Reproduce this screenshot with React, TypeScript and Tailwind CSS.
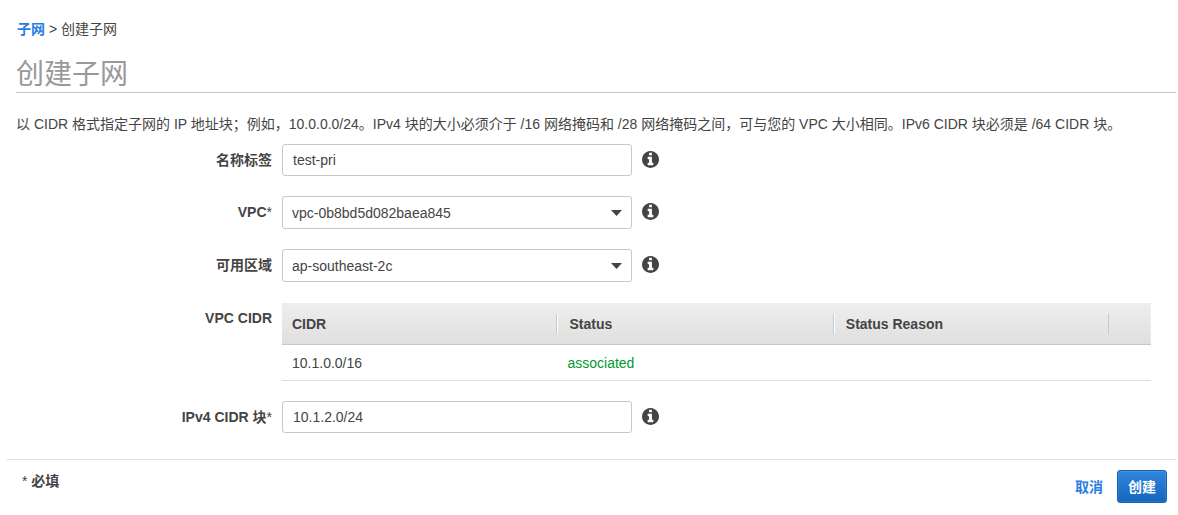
import { useState } from 'react';
import type { ReactNode } from 'react';

function InfoButton({ label }: { label: string }) {
  return (
    <button type="button" aria-label={label} className="mt-[7px] ml-2.5 shrink-0 self-start text-[#444]">
      <svg viewBox="128 128 1536 1536" className="block size-[17px]" fill="currentColor" aria-hidden="true">
        <path d="M1152 1376v-160q0-14-9-23t-23-9h-96v-512q0-14-9-23t-23-9h-320q-14 0-23 9t-9 23v160q0 14 9 23t23 9h96v320h-96q-14 0-23 9t-9 23v160q0 14 9 23t23 9h448q14 0 23-9t9-23zm-128-896v-160q0-14-9-23t-23-9h-192q-14 0-23 9t-9 23v160q0 14 9 23t23 9h192q14 0 23-9t9-23zm640 416q0 209-103 385.500t-279.500 279.500-385.500 103-385.500-103-279.500-279.500-103-385.500 103-385.500 279.500-279.500 385.500-103 385.500 103 279.500 279.500 103 385.500z" />
      </svg>
    </button>
  );
}

type FieldProps = { id: string; label: string; required?: boolean };

function Row({ id, label, required, children }: FieldProps & { children: ReactNode }) {
  return (
    <div className="flex">
      <label htmlFor={id} className="mr-2.5 w-64 shrink-0 pt-1.5 text-right leading-5 font-bold">
        {label}
        {required && <span className="font-normal">*</span>}
      </label>
      {children}
    </div>
  );
}

function TextField({ initial, ...field }: FieldProps & { initial: string }) {
  const [value, setValue] = useState(initial);
  return (
    <Row {...field}>
      <input
        id={field.id}
        type="text"
        value={value}
        onChange={(e) => setValue(e.target.value)}
        className="h-8 w-[350px] rounded-[3px] border border-[#c8c8c8] bg-white px-2.5 text-sm outline-none focus:border-[#2a7de1]"
      />
      <InfoButton label={field.label} />
    </Row>
  );
}

function SelectField({ options, ...field }: FieldProps & { options: string[] }) {
  return (
    <Row {...field}>
      <div className="grid w-[350px] items-center">
        <select
          id={field.id}
          className="col-start-1 row-start-1 h-[33px] w-full appearance-none rounded-[3px] border border-[#c8c8c8] bg-white pr-8 pl-[9px] text-sm outline-none focus:border-[#2a7de1]"
        >
          {options.map((option) => (
            <option key={option}>{option}</option>
          ))}
        </select>
        <svg
          viewBox="0 0 11 6"
          className="pointer-events-none col-start-1 row-start-1 mr-2.5 h-1.5 w-[11px] justify-self-end"
          aria-hidden="true"
        >
          <path d="M0 0h11L5.5 6z" fill="#444" />
        </svg>
      </div>
      <InfoButton label={field.label} />
    </Row>
  );
}

const headings = ['CIDR', 'Status', 'Status Reason'];

export default function App() {
  return (
    <main className="bg-white pt-[19px] pr-0.5 pl-[7px] font-['Liberation_Sans','Noto_Sans_CJK_SC',sans-serif] text-sm text-[#444]">
      <div className="pl-[9px]">
        <nav className="pl-px leading-5">
          <a href="#subnets" className="font-bold text-[#2a7de1]">子网</a> &gt; 创建子网
        </nav>
        <h1 className="mt-[18px] border-b border-[#c8c8c8] text-[28px] leading-[35px] font-normal text-[#999]">
          创建子网
        </h1>
        <p className="mt-[21px] leading-5">
          以 CIDR 格式指定子网的 IP 地址块；例如，10.0.0.0/24。IPv4 块的大小必须介于 /16 网络掩码和 /28 网络掩码之间，可与您的 VPC 大小相同。IPv6 CIDR 块必须是 /64 CIDR 块。
        </p>
      </div>

      <form onSubmit={(e) => e.preventDefault()}>
        <div className="mt-2.5 flex flex-col gap-5 pl-[9px]">
          <TextField id="name" label="名称标签" initial="test-pri" />
          <SelectField id="vpc" label="VPC" required options={['vpc-0b8bd5d082baea845']} />
          <SelectField id="zone" label="可用区域" options={['ap-southeast-2c']} />

          <div className="flex pr-[25px]">
            <div id="cidr-label" className="mr-2.5 w-64 shrink-0 pt-1.5 text-right leading-5 font-bold">
              VPC CIDR
            </div>
            <div className="min-w-0 flex-1 pt-px">
              <table
                aria-labelledby="cidr-label"
                className="w-full table-fixed border-separate border-spacing-0 text-left"
              >
                <colgroup>
                  <col className="w-[31.7%]" />
                  <col className="w-[31.8%]" />
                  <col className="w-[31.7%]" />
                  <col />
                </colgroup>
                <thead>
                  <tr className="h-[42px] bg-linear-to-b from-[#eee] to-[#dfdfdf]">
                    {headings.map((heading, i) => (
                      <th key={heading} scope="col" className="border-b border-[#c8c8c8] p-0 font-bold">
                        <div
                          className={
                            i === 0
                              ? 'h-5 border-r border-[#c8c8c8] pl-2.5 leading-5 shadow-[1px_0_0_#fff]'
                              : i === 1
                                ? 'h-5 border-r border-[#c8c8c8] pl-3 leading-5 shadow-[1px_0_0_#fff]'
                                : 'h-5 border-r border-[#c8c8c8] pl-3 leading-5'
                          }
                        >
                          {heading}
                        </div>
                      </th>
                    ))}
                    <td className="border-b border-[#c8c8c8] p-0" />
                  </tr>
                </thead>
                <tbody>
                  <tr className="h-9">
                    <td className="border-b border-[#ddd] py-0 pl-2.5">10.1.0.0/16</td>
                    <td className="border-b border-[#ddd] py-0 pl-2.5 text-[#093]">associated</td>
                    <td className="border-b border-[#ddd] p-0" />
                    <td className="border-b border-[#ddd] p-0" />
                  </tr>
                </tbody>
              </table>
            </div>
          </div>

          <TextField id="ipv4" label="IPv4 CIDR 块" required initial="10.1.2.0/24" />
        </div>

        <footer className="mt-[26px] flex items-start justify-between border-t border-[#ddd] pt-2.5 pr-[9px] pl-[15px] font-bold">
          <p className="leading-[22px]">
            <span className="font-normal">*</span> 必填
          </p>
          <div className="flex items-center gap-3.5">
            <a href="#cancel" className="leading-5 text-[#2a7de1]">取消</a>
            <button
              type="submit"
              className="h-[33px] rounded-[3px] border border-[#1460b4] bg-linear-to-b from-[#2f86dc] to-[#1565bd] px-2.5 leading-5 font-bold text-white shadow-[inset_0_0_0_1px_rgba(255,255,255,0.1)]"
            >
              创建
            </button>
          </div>
        </footer>
      </form>
    </main>
  );
}
